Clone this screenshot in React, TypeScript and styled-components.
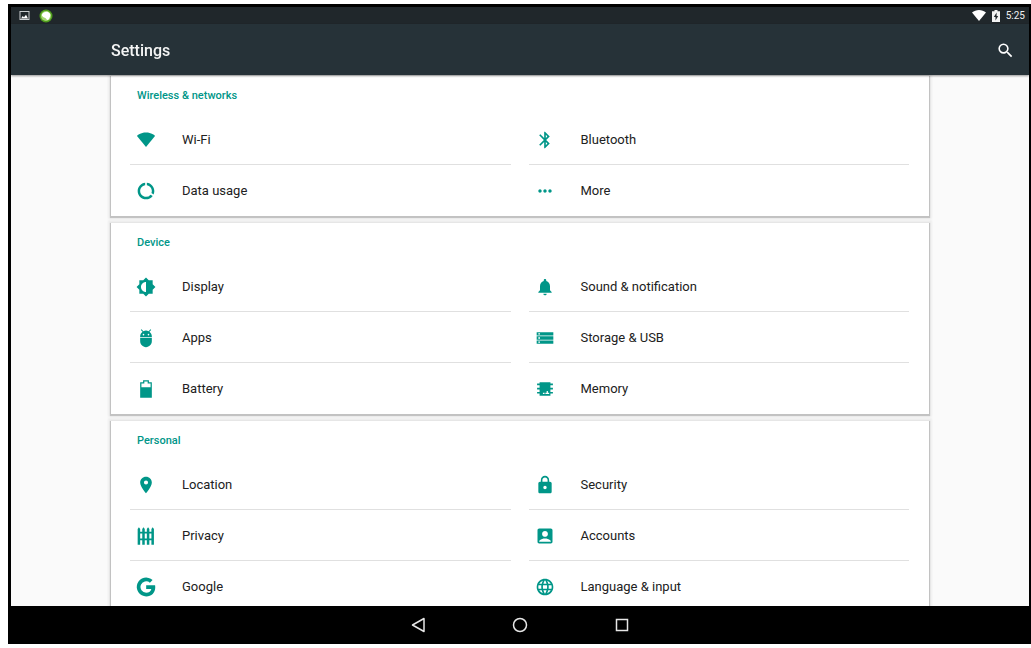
import React from "react";
import styled, { createGlobalStyle } from "styled-components";
import {
  MdAccountBox,
  MdAdb,
  MdBluetooth,
  MdDataUsage,
  MdLanguage,
  MdLock,
  MdMoreHoriz,
  MdNotifications,
  MdPlace,
  MdSearch,
} from "react-icons/md";

const GlobalStyle = createGlobalStyle`
  * { box-sizing: border-box; }
  body {
    margin: 0;
    background: #ffffff;
    font-family: Roboto, "Noto Sans", sans-serif;
  }
`;

const Page = styled.div`
  display: flex;
  height: 100vh;
  padding: 4px 0 4px 8px;
`;

const Device = styled.div`
  flex: 1;
  min-width: 0;
  display: flex;
  flex-direction: column;
  padding: 3px 2px 0 3px;
  background: #000000;
`;

const StatusBar = styled.div`
  flex: none;
  display: flex;
  align-items: center;
  justify-content: space-between;
  height: 17px;
  padding: 0 4px 0 8px;
  background: #20272b;
  color: #ffffff;
`;

const StatusGroup = styled.div<{ $gap: number }>`
  display: flex;
  align-items: center;
  gap: ${(p) => p.$gap}px;
`;

const Clock = styled.time`
  font-size: 10px;
  line-height: 16px;
  color: #f0f1f1;
`;

const Toolbar = styled.header`
  flex: none;
  position: relative;
  display: flex;
  align-items: center;
  justify-content: space-between;
  height: 51px;
  padding: 2px 14px 0 100px;
  background: #263238;
  box-shadow: 0 1px 2px rgba(0, 0, 0, 0.4);
`;

const Title = styled.h1`
  margin: 0;
  font-size: 16px;
  line-height: 24px;
  font-weight: 500;
  color: #f4f5f5;
`;

const IconButton = styled.button`
  display: flex;
  padding: 0;
  border: 0;
  background: none;
  color: #ffffff;
  cursor: pointer;
`;

const Content = styled.main`
  flex: 1;
  min-height: 0;
  display: flex;
  flex-direction: column;
  gap: 7px;
  padding: 1px 100px 0;
  overflow-y: auto;
  scrollbar-width: none;
  background: #fafafa;
`;

const Card = styled.section`
  flex: none;
  padding: 0 20px 0 19px;
  background: #ffffff;
  box-shadow: 0 1px 1px 1px rgba(0, 0, 0, 0.18), 0 0 2px 3px rgba(0, 0, 0, 0.05);
`;

const CardTitle = styled.h2`
  margin: 0;
  padding: 12px 7px 10px;
  font-size: 11px;
  line-height: 16px;
  font-weight: 500;
  color: #009688;
`;

const Tiles = styled.ul`
  display: grid;
  grid-template-columns: 1fr 1fr;
  column-gap: 18px;
  margin: 0;
  padding: 0;
  list-style: none;
`;

const Tile = styled.li<{ $divided: boolean }>`
  height: 51px;
  border-bottom: ${(p) => (p.$divided ? 1 : 0)}px solid #e0e0e0;
`;

const TileLink = styled.a`
  display: flex;
  align-items: center;
  gap: 26px;
  height: 50px;
  padding: 2px 0 0 6px;
  font-size: 13px;
  line-height: 20px;
  color: #212121;
  text-decoration: none;

  svg {
    flex: none;
    width: 20px;
    height: 20px;
    color: #009688;
  }
`;

const NavBar = styled.nav`
  flex: none;
  display: flex;
  align-items: center;
  justify-content: center;
  gap: 82px;
  height: 38px;
  background: #000000;
`;

type GlyphProps = { d: string };
const Glyph = ({ d }: GlyphProps) => (
  <svg viewBox="0 0 24 24" fill="currentColor" fillRule="evenodd" aria-hidden="true">
    <path d={d} />
  </svg>
);

const WifiIcon = () => (
  <Glyph d="M12 20.500 1.200 7.200C1.800 6.200 5.500 3 12 3s10.200 3.200 10.800 4.200z" />
);
const DisplayIcon = () => (
  <Glyph d="M20 8.690V4h-4.690L12 .69 8.690 4H4v4.690L.69 12 4 15.310V20h4.690L12 23.310 15.310 20H20v-4.690L23.310 12zM12 18c-3.310 0-6-2.690-6-6s2.690-6 6-6z" />
);
const BatteryIcon = () => (
  <Glyph d="M8.500 1.500h7V4H19v18.500H5V4h3.500zM10 3v2.500H6.500V10h11V5.500H14V3z" />
);
const StorageIcon = () => (
  <Glyph d="M2 5h20v4H2zM2 10h20v4H2zM2 15h20v4H2zM4 6.200v1.600h2V6.200zM4 11.200v1.600h2v-1.600zM4 16.200v1.600h2v-1.600z" />
);
const MemoryIcon = () => (
  <Glyph d="M5.500 4h13v1.500h3v2h-3v3h3v2h-3v3h3v2h-3V20h-13v-2.500h-3v-2h3v-3h-3v-2h3v-3h-3v-2h3zM9.500 18h2v-1.500h-2zM12.500 18h4.500v-1.500h-1.500v-2h-1.500v2h-1.500z" />
);
const FenceIcon = () => (
  <Glyph d="M2 3.500 3.500 1.500 5 3.500V7h2.500V3.500L9 1.500l1.500 2V7H13V3.500l1.500-2 1.500 2V7h2.500V3.500l1.500-2 1.500 2v19h-3V17H16v5.500h-3V17h-2.500v5.500h-3V17H5v5.500H2zM5 9v6h2.500V9zM10.500 9v6H13V9zM16 9v6h2.500V9z" />
);
const GoogleIcon = () => (
  <Glyph d="M12.200 9.900v4.400h6.200c-.5 2.500-2.700 4.500-6.200 4.500A6.800 6.800 0 1 1 16.700 6.900l3.200-3.200A11.300 11.300 0 1 0 12.200 23.300c6.500 0 10.900-4.600 10.900-11.100 0-.8-.1-1.500-.2-2.300z" />
);

const PictureStatusIcon = () => (
  <svg width="11" height="11" viewBox="0 0 11 11" role="img" aria-label="Screenshot saved">
    <rect x="1" y="1.500" width="9" height="8" fill="none" stroke="#c9cdcf" />
    <path d="M2 8.500 3.700 6l1.300 1.300L7 4.800 9 8.500z" fill="#ffffff" />
  </svg>
);
const AppStatusIcon = () => (
  <svg width="14" height="14" viewBox="0 0 14 14" role="img" aria-label="App notification">
    <circle cx="7" cy="7" r="6.500" fill="#4f9d1d" />
    <circle cx="7" cy="7" r="5" fill="#a5d672" />
    <path d="M3 5.500C4 3 7 2.300 9 3c2.300.9 2.900 3 1.900 5-.7 1.200-.9 2.900-2.200 2.900-1.300 0-1.200-1.500-2.400-2C5 8.400 2.500 7.500 3 5.500z" fill="#ffffff" />
  </svg>
);
const WifiStatusIcon = () => (
  <svg width="14" height="11" viewBox="0 0 14 11" role="img" aria-label="Wi-Fi signal">
    <path d="M7 11 0 2.500C2 1 4.300 0 7 0s5 1 7 2.500z" fill="#ffffff" />
  </svg>
);
const BatteryStatusIcon = () => (
  <svg width="8" height="12" viewBox="0 0 8 12" role="img" aria-label="Battery charging">
    <path d="M2.500 0h3v1.200H8V12H0V1.200h2.500z" fill="#f2f3f3" />
    <path d="M4.600 2.500 1.800 7h1.700v3.500L6.200 6H4.600z" fill="#20272b" />
  </svg>
);

type Setting = { label: string; icon: React.ReactNode };
type Group = { title: string; settings: Setting[] };

const groups: Group[] = [
  {
    title: "Wireless & networks",
    settings: [
      { label: "Wi-Fi", icon: <WifiIcon /> },
      { label: "Bluetooth", icon: <MdBluetooth /> },
      { label: "Data usage", icon: <MdDataUsage /> },
      { label: "More", icon: <MdMoreHoriz /> },
    ],
  },
  {
    title: "Device",
    settings: [
      { label: "Display", icon: <DisplayIcon /> },
      { label: "Sound & notification", icon: <MdNotifications /> },
      { label: "Apps", icon: <MdAdb /> },
      { label: "Storage & USB", icon: <StorageIcon /> },
      { label: "Battery", icon: <BatteryIcon /> },
      { label: "Memory", icon: <MemoryIcon /> },
    ],
  },
  {
    title: "Personal",
    settings: [
      { label: "Location", icon: <MdPlace /> },
      { label: "Security", icon: <MdLock /> },
      { label: "Privacy", icon: <FenceIcon /> },
      { label: "Accounts", icon: <MdAccountBox /> },
      { label: "Google", icon: <GoogleIcon /> },
      { label: "Language & input", icon: <MdLanguage /> },
    ],
  },
];

const SettingsCard = ({ title, settings }: Group) => (
  <Card>
    <CardTitle>{title}</CardTitle>
    <Tiles>
      {settings.map((s, i) => (
        <Tile key={s.label} $divided={i < settings.length - 2}>
          <TileLink href="#">
            {s.icon}
            {s.label}
          </TileLink>
        </Tile>
      ))}
    </Tiles>
  </Card>
);

export default function App() {
  return (
    <>
      <GlobalStyle />
      <Page>
        <Device>
          <StatusBar>
            <StatusGroup $gap={9}>
              <PictureStatusIcon />
              <AppStatusIcon />
            </StatusGroup>
            <StatusGroup $gap={6}>
              <WifiStatusIcon />
              <BatteryStatusIcon />
              <Clock>5:25</Clock>
            </StatusGroup>
          </StatusBar>
          <Toolbar>
            <Title>Settings</Title>
            <IconButton type="button" aria-label="Search">
              <MdSearch size={19} />
            </IconButton>
          </Toolbar>
          <Content>
            {groups.map((g) => (
              <SettingsCard key={g.title} {...g} />
            ))}
          </Content>
          <NavBar aria-label="System navigation">
            <IconButton type="button" aria-label="Back">
              <svg width="20" height="20" viewBox="0 0 20 20" fill="none" stroke="#e6e6e6" strokeWidth="1.500" strokeLinejoin="round">
                <path d="M16 3.500v13L4.500 10z" />
              </svg>
            </IconButton>
            <IconButton type="button" aria-label="Home">
              <svg width="20" height="20" viewBox="0 0 20 20" fill="none" stroke="#e6e6e6" strokeWidth="1.500">
                <circle cx="10" cy="10" r="6.500" />
              </svg>
            </IconButton>
            <IconButton type="button" aria-label="Overview">
              <svg width="20" height="20" viewBox="0 0 20 20" fill="none" stroke="#e6e6e6" strokeWidth="1.500">
                <rect x="4.500" y="4.500" width="11" height="11" />
              </svg>
            </IconButton>
          </NavBar>
        </Device>
      </Page>
    </>
  );
}
